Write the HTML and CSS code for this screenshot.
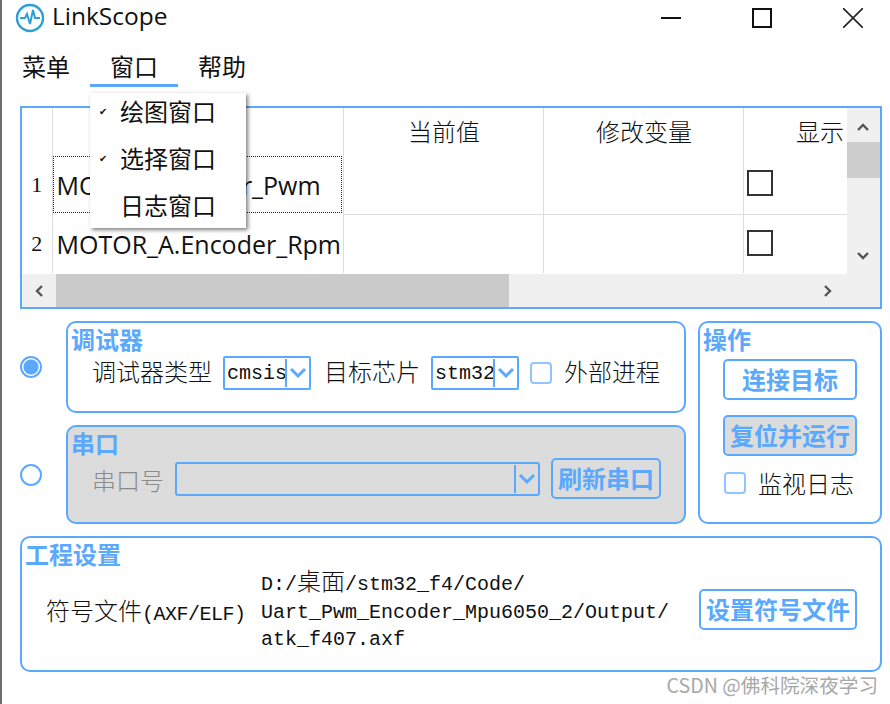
FILE: index.html
```html
<!DOCTYPE html>
<html lang="zh-CN">
  <head>
    <meta charset="UTF-8" />
    <title>LinkScope</title>
    <link rel="stylesheet" href="styles.css">
  </head>
  <body>
    <div class="window">
      <div class="titlebar">
        <svg class="app-icon" width="30" height="30" viewBox="0 0 30 30">
          <circle cx="15" cy="15" r="13" fill="none" stroke="#2a9fd8" stroke-width="2.4" />
          <path d="M5 15h5l2-4 3 10 3-14 2 8h5" fill="none" stroke="#2a9fd8" stroke-width="2" />
        </svg>
        <span class="app-title">LinkScope</span>
        <div class="win-buttons">
          <svg width="20" height="20" viewBox="0 0 20 20"><path d="M0 10h20" stroke="#111" stroke-width="2" /></svg>
          <svg width="20" height="20" viewBox="0 0 20 20"><rect x="1" y="1" width="18" height="18" fill="none" stroke="#111" stroke-width="2" /></svg>
          <svg width="20" height="20" viewBox="0 0 20 20"><path d="M0 0l20 20M20 0L0 20" stroke="#222" stroke-width="1.6" /></svg>
        </div>
      </div>

      <div class="menubar">
        <div class="menu-item">菜单</div>
        <div class="menu-item active">
          窗口
          <div class="dropdown">
            <div class="dropdown-item checked">绘图窗口</div>
            <div class="dropdown-item checked">选择窗口</div>
            <div class="dropdown-item">日志窗口</div>
          </div>
        </div>
        <div class="menu-item">帮助</div>
      </div>

      <div class="content">
        <div class="table-panel">
          <div class="table-top">
            <div class="table-view">
              <table>
                <colgroup>
                  <col class="col-num" />
                  <col class="col-name" />
                  <col class="col-val" />
                  <col class="col-val" />
                  <col class="col-show" />
                </colgroup>
                <tr class="head-row">
                  <th></th>
                  <th></th>
                  <th>当前值</th>
                  <th>修改变量</th>
                  <th>显示</th>
                </tr>
                <tr class="row-one">
                  <td class="num">1</td>
                  <td class="name focused">MOTOR_A.Motor_Pwm</td>
                  <td></td>
                  <td></td>
                  <td><span class="grid-check"></span></td>
                </tr>
                <tr class="row-two">
                  <td class="num">2</td>
                  <td class="name">MOTOR_A.Encoder_Rpm</td>
                  <td></td>
                  <td></td>
                  <td><span class="grid-check"></span></td>
                </tr>
              </table>
            </div>
            <div class="vscroll">
              <svg class="arrow" width="14" height="10" viewBox="0 0 14 10"><path d="M2 8l5-5 5 5" fill="none" stroke="#555" stroke-width="2.4" /></svg>
              <div class="vthumb"></div>
              <svg class="arrow arrow-down" width="14" height="10" viewBox="0 0 14 10"><path d="M2 2l5 5 5-5" fill="none" stroke="#555" stroke-width="2.4" /></svg>
            </div>
          </div>
          <div class="hscroll">
            <svg class="arrow-h" width="10" height="14" viewBox="0 0 10 14"><path d="M8 2L3 7l5 5" fill="none" stroke="#555" stroke-width="2.4" /></svg>
            <div class="hthumb"></div>
            <svg class="arrow-h arrow-right" width="10" height="14" viewBox="0 0 10 14"><path d="M2 2l5 5-5 5" fill="none" stroke="#555" stroke-width="2.4" /></svg>
          </div>
        </div>

        <div class="middle">
          <div class="connections">
            <div class="connection debug-conn">
              <input type="radio" name="conn" class="radio" checked />
              <div class="panel debug-panel">
                <div class="panel-title">调试器</div>
                <div class="debug-fields">
                  <span class="label">调试器类型</span>
                  <div class="combo combo-small">
                    <span class="combo-text">cmsis</span>
                    <svg class="chevron" width="18" height="12" viewBox="0 0 18 12"><path d="M2 2l7 7 7-7" fill="none" stroke="#5aa9ff" stroke-width="3" /></svg>
                  </div>
                  <span class="label chip-label">目标芯片</span>
                  <div class="combo combo-small">
                    <span class="combo-text">stm32</span>
                    <svg class="chevron" width="18" height="12" viewBox="0 0 18 12"><path d="M2 2l7 7 7-7" fill="none" stroke="#5aa9ff" stroke-width="3" /></svg>
                  </div>
                  <input type="checkbox" class="check external-check" />
                  <span class="label external-label">外部进程</span>
                </div>
              </div>
            </div>
            <div class="connection serial-conn">
              <input type="radio" name="conn" class="radio" />
              <div class="panel serial-panel">
                <div class="panel-title">串口</div>
                <div class="serial-fields">
                  <span class="label muted">串口号</span>
                  <div class="combo combo-wide">
                    <span class="combo-text"></span>
                    <svg class="chevron" width="18" height="12" viewBox="0 0 18 12"><path d="M2 2l7 7 7-7" fill="none" stroke="#5aa9ff" stroke-width="3" /></svg>
                  </div>
                  <button class="btn refresh-btn">刷新串口</button>
                </div>
              </div>
            </div>
          </div>

          <div class="panel ops-panel">
            <div class="panel-title">操作</div>
            <div class="ops-body">
              <button class="btn ops-btn">连接目标</button>
              <button class="btn ops-btn btn-grey">复位并运行</button>
              <div class="ops-log">
                <input type="checkbox" class="check" />
                <span class="label">监视日志</span>
              </div>
            </div>
          </div>
        </div>

        <div class="panel project-panel">
          <div class="panel-title">工程设置</div>
          <div class="project-fields">
            <span class="label symbol-label">符号文件<span class="latin symbol-ext">(AXF/ELF)</span></span>
            <div class="path latin">D:/<span class="cjk">桌面</span>/stm32_f4/Code/<br />Uart_Pwm_Encoder_Mpu6050_2/Output/<br />atk_f407.axf</div>
            <button class="btn symbol-btn">设置符号文件</button>
          </div>
        </div>
      </div>

      <div class="watermark">CSDN @佛科院深夜学习</div>
    </div>
  </body>
</html>
```

FILE: styles.css
```css
* {
  box-sizing: border-box;
}

html,
body {
  margin: 0;
  height: 100%;
}

body {
  background-color: white;
  color: #111;
  font-family: "Noto Sans CJK SC", sans-serif;
  font-weight: 300;
  font-size: 24px;
  overflow: hidden;
}

.window {
  position: relative;
  height: 704px;
  border-left: 2px solid #6e6e6e;
}

/* title bar */
.titlebar {
  display: flex;
  align-items: center;
  height: 36px;
  padding-left: 13px;
}

.app-title {
  margin-left: 7px;
  padding-bottom: 5px;
  font-family: "Open Sans", sans-serif;
  font-weight: 400;
  font-size: 24.5px;
}

.win-buttons {
  display: flex;
  gap: 71px;
  margin-left: auto;
  margin-right: 27px;
}

/* menu */
.menubar {
  display: flex;
  margin-top: 14px;
}

.menu-item {
  position: relative;
  height: 37px;
  padding: 0 20px;
  line-height: 32px;
  font-weight: 400;
}

.menu-item.active {
  border-bottom: 3px solid #5aa9ff;
}

.dropdown {
  position: absolute;
  top: 43px;
  left: 0;
  z-index: 5;
  width: 156px;
  height: 135px;
  background-color: white;
  box-shadow: 2px 2px 4px rgba(0, 0, 0, 0.5);
}

.dropdown-item {
  position: relative;
  height: 47px;
  padding-left: 30px;
  line-height: 35px;
  font-weight: 400;
}

.dropdown-item.checked::before {
  content: "✔";
  position: absolute;
  left: 9px;
  top: 1px;
  font-family: "DejaVu Sans", sans-serif;
  font-size: 10px;
}

/* main area */
.content {
  display: flex;
  flex-direction: column;
  gap: 12px;
  padding: 19px 8px 0 18px;
}

.table-panel {
  height: 203px;
  border: 2px solid #5aa9ff;
  background-color: #f0f0f0;
}

.table-top {
  display: flex;
  height: 166px;
}

.table-view {
  width: 825px;
  overflow: hidden;
  background-color: white;
}

table {
  width: 873px;
  table-layout: fixed;
  border-collapse: collapse;
}

.col-num {
  width: 30px;
}

.col-name {
  width: 291px;
}

.col-val {
  width: 200px;
}

.col-show {
  width: 152px;
}

th {
  height: 47px;
  padding: 0 0 2px 2px;
  border-right: 1px solid #dcdcdc;
  font-weight: 300;
  font-size: 24px;
  white-space: nowrap;
}

td {
  padding: 0;
  border-right: 1px solid #dcdcdc;
}

.row-one td {
  height: 59px;
  border-bottom: 1px solid #dcdcdc;
}

.row-one td.num,
.row-one td.name {
  border-bottom: none;
}

.row-two td {
  height: 59px;
}

.num {
  font-family: "Liberation Serif", serif;
  font-size: 22px;
  text-align: center;
}

.name {
  padding-left: 4px;
  font-family: "Open Sans", sans-serif;
  font-weight: 400;
  font-size: 25px;
  white-space: nowrap;
  overflow: hidden;
}

.focused {
  outline: 1px dotted #222;
  outline-offset: -2px;
}

.grid-check {
  display: block;
  width: 26px;
  height: 26px;
  margin: 0 0 2px 3px;
  border: 2px solid #333;
}

/* scroll bars */
.vscroll {
  position: relative;
  flex: 1;
  padding-top: 34px;
}

.vthumb {
  height: 36px;
  background-color: #cdcdcd;
}

.arrow {
  position: absolute;
  top: 14px;
  left: 9px;
}

.arrow-down {
  top: 143px;
}

.hscroll {
  position: relative;
  height: 33px;
  padding-left: 34px;
}

.hthumb {
  width: 453px;
  height: 33px;
  background-color: #cacaca;
}

.arrow-h {
  position: absolute;
  top: 10px;
  left: 12px;
}

.arrow-right {
  left: 801px;
}

/* panels */
.panel {
  border: 2px solid #5aa9ff;
  border-radius: 10px;
}

.panel-title {
  padding: 1px 0 0 3px;
  color: #5aa9ff;
  font-weight: 700;
  line-height: 30px;
}

.middle {
  display: flex;
  gap: 12px;
  height: 203px;
}

.connections {
  display: flex;
  flex-direction: column;
  gap: 12px;
  flex: 1;
}

.connection {
  display: flex;
  align-items: center;
}

.debug-conn {
  height: 92px;
}

.serial-conn {
  height: 99px;
}

.radio {
  appearance: none;
  flex: none;
  width: 22px;
  height: 22px;
  margin: 0 24px 0 0;
  border: 2px solid #5aa9ff;
  border-radius: 50%;
  background-color: white;
}

.radio:checked {
  background: radial-gradient(circle, #5aa9ff 0 7px, white 8px);
}

.debug-panel,
.serial-panel {
  flex: 1;
  height: 100%;
}

.serial-panel {
  background-color: #dcdcdc;
}

.label {
  white-space: nowrap;
}

.muted {
  color: #8a8a8a;
  padding-top: 2px;
}

.latin,
.combo-text {
  font-family: "Liberation Mono", "Noto Sans CJK SC", monospace;
  font-weight: 400;
  font-size: 20px;
}

.cjk {
  font-family: "Noto Sans CJK SC", sans-serif;
  font-weight: 300;
  font-size: 24px;
}

.debug-fields {
  display: flex;
  align-items: center;
  gap: 11px;
  margin-top: -1px;
  padding-left: 24px;
}

.debug-fields .label {
  padding-bottom: 4px;
}

.chip-label {
  margin-left: 2px;
}

.external-check {
  margin-left: 2px;
}

.external-label {
  margin-left: 1px;
}

.combo {
  display: flex;
  align-items: center;
  height: 34px;
  border: 2px solid #5aa9ff;
  border-radius: 2px;
}

.combo-small {
  width: 88px;
}

.combo-wide {
  width: 365px;
  border-radius: 3px;
}

.combo-text {
  flex: 1;
  min-width: 0;
  overflow: hidden;
  padding-left: 2px;
  height: 28px;
  line-height: 30px;
  border-right: 2px solid #5aa9ff;
}

.chevron {
  flex: none;
  margin: 0 2px 0 2px;
}

.check {
  appearance: none;
  flex: none;
  width: 22px;
  height: 22px;
  margin: 0;
  border: 2px solid #8fc4ff;
  border-radius: 4px;
  background-color: white;
}

.serial-fields {
  display: flex;
  align-items: center;
  margin-top: 0;
  padding-left: 24px;
}

.serial-fields .combo {
  margin-left: 11px;
}

.btn {
  height: 41px;
  padding: 0 0 2px;
  border: 2px solid #5aa9ff;
  border-radius: 5px;
  background-color: transparent;
  color: #5aa9ff;
  font-family: "Noto Sans CJK SC", sans-serif;
  font-weight: 700;
  font-size: 24px;
  line-height: 1;
}

.refresh-btn {
  width: 110px;
  margin-left: 11px;
  font-size: 24px;
}

.ops-panel {
  width: 184px;
}

.ops-body {
  display: flex;
  flex-direction: column;
  gap: 15px;
  padding: 5px 0 0 23px;
}

.ops-btn {
  width: 134px;
}

.btn-grey {
  background-color: #dcdcdc;
}

.ops-log {
  display: flex;
  align-items: center;
  gap: 12px;
  margin-top: -6px;
  padding-left: 1px;
}

.project-panel {
  height: 136px;
}

.project-fields {
  display: flex;
  align-items: center;
  margin-top: -3px;
  padding-left: 24px;
}

.symbol-label {
  width: 215px;
}

.symbol-ext {
  letter-spacing: -0.5px;
}

.path {
  flex: 1;
  line-height: 27.5px;
  white-space: nowrap;
}

.symbol-btn {
  width: 158px;
  margin-right: 23px;
}

.watermark {
  position: absolute;
  right: 12px;
  bottom: 7px;
  color: #a8a8a8;
  font-size: 19.6px;
  font-weight: 400;
  line-height: 24px;
  white-space: nowrap;
}
```
